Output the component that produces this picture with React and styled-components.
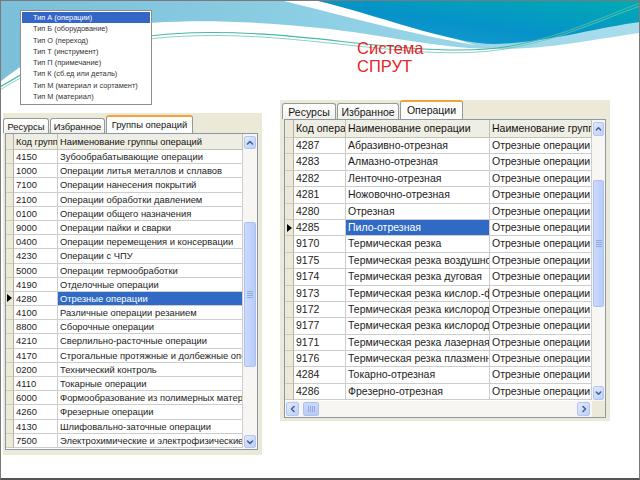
import React from 'react';
import styled, { createGlobalStyle } from 'styled-components';

const GlobalStyle = createGlobalStyle`
  html, body { margin: 0; padding: 0; background: #fff; }
  body { font-family: "Liberation Sans", Arial, sans-serif; }
  *, *::before, *::after { box-sizing: border-box; }
`;

const Slide = styled.div`
  position: relative;
  width: 640px;
  height: 480px;
  overflow: hidden;
  background: #fff;
  &::after {
    content: '';
    position: absolute;
    inset: 0;
    border: 1px solid #7a7a7a;
    border-bottom: 2px solid #555;
    pointer-events: none;
  }
`;

const Backdrop = styled.svg`
  position: absolute;
  left: 0;
  top: 0;
  width: 640px;
  height: 480px;
`;

const Layout = styled.div`
  position: relative;
  display: flex;
  align-items: flex-start;
  padding-left: 3px;
`;

const LeftColumn = styled.div`
  width: 259px;
  display: flex;
  flex-direction: column;
`;

const RightColumn = styled.div`
  width: 330px;
  margin-left: 18px;
  display: flex;
  flex-direction: column;
`;

const ListBox = styled.ul`
  margin: 10px 0 0 17px;
  padding: 1px;
  width: 132px;
  height: 95px;
  list-style: none;
  background: #fff;
  border: 1px solid #8d8d8d;
  font-size: 7.4px;
`;

const ListItem = styled.li`
  height: 11.25px;
  line-height: 11.25px;
  padding-left: 11px;
  white-space: nowrap;
  color: ${p => (p.$active ? '#fff' : '#333')};
  background: ${p => (p.$active ? '#3466c6' : 'transparent')};
`;

const Title = styled.h1`
  margin: 39px 0 0 77px;
  font-size: 16.5px;
  line-height: 18px;
  font-weight: normal;
  color: #e42628;
`;

const Panel = styled.div`
  margin-top: ${p => p.$mt}px;
  width: ${p => p.$w}px;
  height: ${p => p.$h}px;
  background: #ece9d8;
  display: flex;
  flex-direction: column;
  font-size: ${p => p.$fs}px;
`;

const TabStrip = styled.div`
  display: flex;
  align-items: flex-end;
  gap: 1px;
  height: ${p => p.$h}px;
  padding-left: ${p => p.$pl}px;
  flex: none;
`;

const Tab = styled.div`
  width: ${p => p.$w}px;
  height: ${p => p.$h}px;
  border: 1px solid #919b9c;
  border-bottom: none;
  border-top: ${p => (p.$active ? '2px solid #f2a43a' : '1px solid #919b9c')};
  border-radius: 3px 3px 0 0;
  background: ${p => (p.$active ? '#fcfcfb' : 'linear-gradient(#ffffff, #f1f0ea)')};
  display: flex;
  align-items: center;
  justify-content: center;
  color: #151515;
  white-space: nowrap;
  padding-bottom: ${p => (p.$active ? 2 : 0)}px;
`;

const Frame = styled.div`
  margin-left: ${p => p.$ml}px;
  width: ${p => p.$w}px;
  height: ${p => p.$h}px;
  border: 1px solid #8a99a8;
  background: #fff;
  display: flex;
  flex-direction: column;
  overflow: hidden;
  flex: none;
`;

const Main = styled.div`
  display: flex;
  flex: 1;
  min-height: 0;
`;

const Table = styled.div`
  flex: 1;
  min-width: 0;
  overflow: hidden;
`;

const Row = styled.div`
  display: grid;
  grid-template-columns: ${p => p.$cols};
  height: ${p => p.$h}px;
  line-height: ${p => p.$h - 1}px;
`;

const RowHead = styled.div`
  background: #ece9d8;
  border-right: 1px solid #b3b0a0;
  border-bottom: 1px solid #cfcbbb;
  display: flex;
  align-items: center;
`;

const Pointer = styled.span`
  width: 0;
  height: 0;
  margin-left: ${p => p.$ml}px;
  border-left: 5px solid #000;
  border-top: 4px solid transparent;
  border-bottom: 4px solid transparent;
`;

const Cell = styled.div`
  border-right: 1px solid #cdcdcd;
  border-bottom: 1px solid #cdcdcd;
  padding-left: ${p => p.$pad}px;
  white-space: nowrap;
  overflow: hidden;
  color: ${p => (p.$selected ? '#fff' : '#1c1c1c')};
  background: ${p => (p.$selected ? '#316ac5' : '#fff')};
`;

const HeadCell = styled(Cell)`
  background: #efeee4;
  border-right-color: #c5c2ae;
  border-bottom-color: #c5c2ae;
  color: #111;
`;

const VBar = styled.div`
  width: ${p => p.$w}px;
  flex: none;
  background: #f7f6f2;
  display: flex;
  flex-direction: column;
  align-items: center;
  padding: 2px 0 1px;
`;

const Track = styled.div`
  flex: 1;
  display: flex;
  flex-direction: ${p => (p.$horizontal ? 'row' : 'column')};
  align-items: center;
  width: ${p => (p.$horizontal ? 'auto' : '100%')};
  height: ${p => (p.$horizontal ? '100%' : 'auto')};
`;

const ArrowBtn = styled.div`
  width: ${p => p.$w}px;
  height: ${p => p.$h}px;
  flex: none;
  border: 1px solid #b3c6f2;
  border-radius: 2px;
  background: linear-gradient(135deg, #e1eafd, #bdd0fa);
  display: flex;
  align-items: center;
  justify-content: center;
`;

const Thumb = styled.div`
  flex: none;
  width: ${p => p.$w}px;
  height: ${p => p.$h}px;
  margin-top: ${p => p.$mt || 0}px;
  margin-left: ${p => p.$ml || 0}px;
  border: 1px solid #abc1f1;
  border-radius: 2px;
  background: ${p => (p.$horizontal ? 'linear-gradient(#cbdafc, #b9ccf8)' : 'linear-gradient(90deg, #cbdafc, #b9ccf8)')};
  display: flex;
  flex-direction: ${p => (p.$horizontal ? 'row' : 'column')};
  align-items: center;
  justify-content: center;
  gap: 1px;
`;

const Grip = styled.span`
  display: block;
  background: #eef3fe;
  border-${p => (p.$horizontal ? 'right' : 'bottom')}: 1px solid #90a9e0;
  width: ${p => (p.$horizontal ? 1 : 6)}px;
  height: ${p => (p.$horizontal ? 6 : 1)}px;
`;

const BottomBar = styled.div`
  display: flex;
  height: 16px;
  flex: none;
`;

const HBar = styled.div`
  flex: 1;
  display: flex;
  align-items: center;
  background: #f7f6f2;
  padding: 1px 2px 1px 1px;
`;

const Corner = styled.div`
  width: ${p => p.$w}px;
  background: #ece9d8;
`;

function Chevron({ dir }) {
  const pts = {
    up: '2.5,6 5,3.5 7.5,6',
    down: '2.5,4 5,6.5 7.5,4',
    left: '6,2.5 3.5,5 6,7.5',
    right: '4,2.5 6.5,5 4,7.5',
  }[dir];
  return (
    <svg width="10" height="10" viewBox="0 0 10 10">
      <polyline points={pts} fill="none" stroke="#4a5f8c" strokeWidth="1.6" strokeLinecap="round" strokeLinejoin="round" />
    </svg>
  );
}

function Grips({ horizontal }) {
  return (
    <>
      <Grip $horizontal={horizontal} />
      <Grip $horizontal={horizontal} />
      <Grip $horizontal={horizontal} />
      <Grip $horizontal={horizontal} />
    </>
  );
}

const typeList = [
  'Тип А (операции)',
  'Тип Б (оборудование)',
  'Тип О (переход)',
  'Тип Т (инструмент)',
  'Тип П (примечание)',
  'Тип К (сб.ед или деталь)',
  'Тип М (материал и сортамент)',
  'Тип М (материал)',
];

const groups = [
  ['4150', 'Зубообрабатывающие операции'],
  ['1000', 'Операции литья металлов и сплавов'],
  ['7100', 'Операции нанесения покрытий'],
  ['2100', 'Операции обработки давлением'],
  ['0100', 'Операции общего назначения'],
  ['9000', 'Операции пайки и сварки'],
  ['0400', 'Операции перемещения и консервации'],
  ['4230', 'Операции с ЧПУ'],
  ['5000', 'Операции термообработки'],
  ['4190', 'Отделочные операции'],
  ['4280', 'Отрезные операции'],
  ['4100', 'Различные операции резанием'],
  ['8800', 'Сборочные операции'],
  ['4210', 'Сверлильно-расточные операции'],
  ['4170', 'Строгальные протяжные и долбежные операции'],
  ['0200', 'Технический контроль'],
  ['4110', 'Токарные операции'],
  ['6000', 'Формообразование из полимерных материалов'],
  ['4260', 'Фрезерные операции'],
  ['4130', 'Шлифовально-заточные операции'],
  ['7500', 'Электрохимические и электрофизические операции'],
];

const operations = [
  ['4287', 'Абразивно-отрезная'],
  ['4283', 'Алмазно-отрезная'],
  ['4282', 'Ленточно-отрезная'],
  ['4281', 'Ножовочно-отрезная'],
  ['4280', 'Отрезная'],
  ['4285', 'Пило-отрезная'],
  ['9170', 'Термическая резка'],
  ['9175', 'Термическая резка воздушно-плазменная'],
  ['9174', 'Термическая резка дуговая'],
  ['9173', 'Термическая резка кислор.-флюсовая'],
  ['9172', 'Термическая резка кислородная'],
  ['9177', 'Термическая резка кислородно-флюсовая'],
  ['9171', 'Термическая резка лазерная'],
  ['9176', 'Термическая резка плазменная'],
  ['4284', 'Токарно-отрезная'],
  ['4286', 'Фрезерно-отрезная'],
];

function VScroll({ w, btnW, btnH, thumbTop, thumbLen }) {
  return (
    <VBar $w={w}>
      <ArrowBtn $w={btnW} $h={btnH}><Chevron dir="up" /></ArrowBtn>
      <Track>
        <Thumb $w={btnW} $h={thumbLen} $mt={thumbTop}><Grips /></Thumb>
      </Track>
      <ArrowBtn $w={btnW} $h={btnH}><Chevron dir="down" /></ArrowBtn>
    </VBar>
  );
}

function Background() {
  return (
    <Backdrop viewBox="0 0 640 480">
      <defs>
        <linearGradient id="lightBand" x1="0" y1="0" x2="1" y2="0">
          <stop offset="0" stopColor="#7bbfd8" />
          <stop offset="0.5" stopColor="#8dcfe4" />
          <stop offset="1" stopColor="#a9ddec" />
        </linearGradient>
        <linearGradient id="darkWave" x1="0" y1="1" x2="1" y2="0">
          <stop offset="0" stopColor="#1f9fd2" />
          <stop offset="0.45" stopColor="#0692c9" />
          <stop offset="1" stopColor="#00abb2" />
        </linearGradient>
      </defs>
      <path d="M0,0 H640 V33 C600,38 560,48 505,49 C450,50 400,38 330,29 C260,21 170,17 110,28 C65,38 30,58 0,82 Z" fill="url(#lightBand)" />
      <path d="M280,0 H314 C370,12 425,30 475,45 C420,36 360,20 280,0 Z" fill="#fff" />
      <path d="M314,0 H640 V22 C600,27 545,43 495,44 C450,44 375,14 314,0 Z" fill="url(#darkWave)" />
      <path d="M0,87 C40,62 90,40 170,34 C260,28 330,42 410,48 C450,51 480,51 505,47 C560,38 600,18 640,3" stroke="#48b8a4" strokeWidth="1.1" fill="none" />
      <path d="M0,90 C40,65 90,43 170,37 C260,31 330,45 410,51 C450,54 480,53 505,49 C560,40 600,20 640,6" stroke="#6cc6b6" strokeWidth="0.8" fill="none" />
    </Backdrop>
  );
}

export default function App() {
  const leftCols = '8px 44px 1fr';
  const rightCols = '9px 52px 144px 102px';
  return (
    <>
      <GlobalStyle />
      <Slide>
        <Background />
        <Layout>
          <LeftColumn>
            <ListBox>
              {typeList.map((t, i) => (
                <ListItem key={i} $active={i === 0}>{t}</ListItem>
              ))}
            </ListBox>

            <Panel $mt={8} $w={259} $h={342} $fs={9.4}>
              <TabStrip $h={20} $pl={0}>
                <Tab $w={46} $h={15}>Ресурсы</Tab>
                <Tab $w={55} $h={15}>Избранное</Tab>
                <Tab $w={87} $h={18} $active>Группы операций</Tab>
              </TabStrip>
              <Frame $ml={2} $w={253} $h={317}>
                <Main>
                  <Table>
                    <Row $cols={leftCols} $h={16}>
                      <RowHead />
                      <HeadCell $pad={2}>Код группы</HeadCell>
                      <HeadCell $pad={2}>Наименование группы операций</HeadCell>
                    </Row>
                    {groups.map(([code, name]) => {
                      const sel = code === '4280';
                      return (
                        <Row key={code} $cols={leftCols} $h={14.2}>
                          <RowHead>{sel && <Pointer $ml={1} />}</RowHead>
                          <Cell $pad={2}>{code}</Cell>
                          <Cell $pad={2} $selected={sel}>{name}</Cell>
                        </Row>
                      );
                    })}
                  </Table>
                  <VScroll w={14} btnW={12} btnH={13} thumbTop={73} thumbLen={145} />
                </Main>
              </Frame>
            </Panel>
          </LeftColumn>

          <RightColumn>
            <Title>Система<br />СПРУТ</Title>
            <Panel $mt={25} $w={330} $h={321} $fs={10.5}>
              <TabStrip $h={19} $pl={2}>
                <Tab $w={54} $h={16}>Ресурсы</Tab>
                <Tab $w={62} $h={16}>Избранное</Tab>
                <Tab $w={63} $h={19} $active>Операции</Tab>
              </TabStrip>
              <Frame $ml={4} $w={322} $h={299}>
                <Main>
                  <Table>
                    <Row $cols={rightCols} $h={18}>
                      <RowHead />
                      <HeadCell $pad={2}>Код операции</HeadCell>
                      <HeadCell $pad={2}>Наименование операции</HeadCell>
                      <HeadCell $pad={2}>Наименование группы операций</HeadCell>
                    </Row>
                    {operations.map(([code, name]) => {
                      const sel = code === '4285';
                      return (
                        <Row key={code} $cols={rightCols} $h={16.4}>
                          <RowHead>{sel && <Pointer $ml={2} />}</RowHead>
                          <Cell $pad={2}>{code}</Cell>
                          <Cell $pad={2} $selected={sel}>{name}</Cell>
                          <Cell $pad={2}>Отрезные операции</Cell>
                        </Row>
                      );
                    })}
                  </Table>
                  <VScroll w={13} btnW={11} btnH={14} thumbTop={44} thumbLen={127} />
                </Main>
                <BottomBar>
                  <HBar>
                    <ArrowBtn $w={13} $h={14}><Chevron dir="left" /></ArrowBtn>
                    <Track $horizontal>
                      <Thumb $horizontal $w={16} $h={14} $ml={4}><Grips horizontal /></Thumb>
                    </Track>
                    <ArrowBtn $w={13} $h={14}><Chevron dir="right" /></ArrowBtn>
                  </HBar>
                  <Corner $w={13} />
                </BottomBar>
              </Frame>
            </Panel>
          </RightColumn>
        </Layout>
      </Slide>
    </>
  );
}
